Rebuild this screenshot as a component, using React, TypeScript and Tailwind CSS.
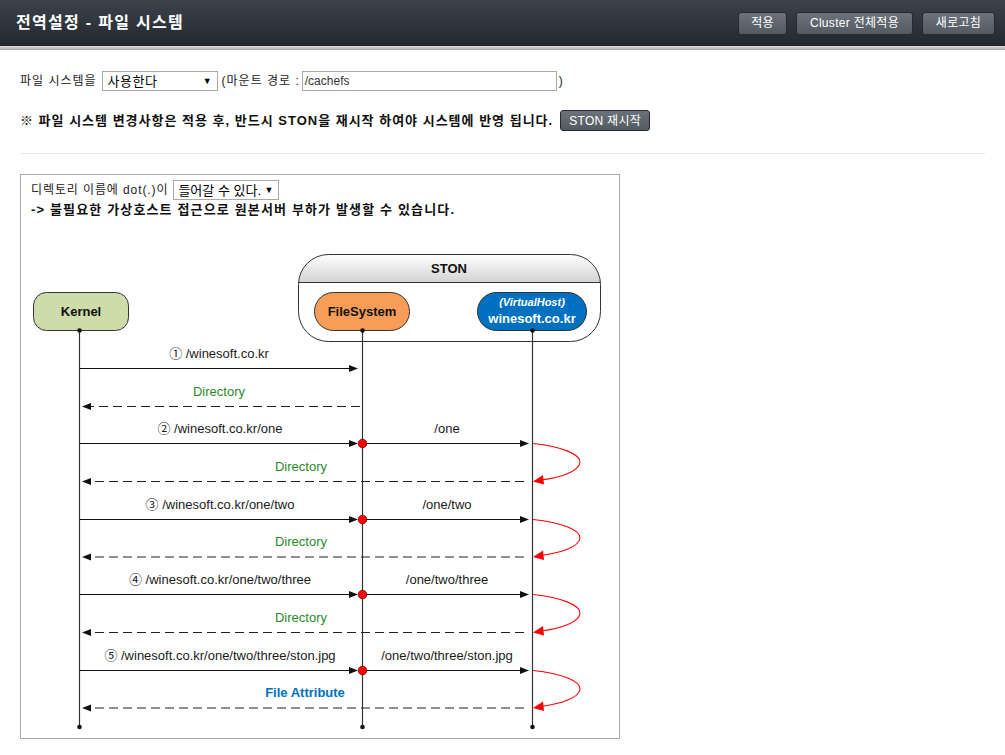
import React from "react";

const FONT = '"Liberation Sans", "Noto Sans CJK KR", sans-serif';

function ArrowR({ x1, x2, y }: { x1: number; x2: number; y: number }) {
  return (
    <g>
      <line x1={x1} y1={y} x2={x2 - 7} y2={y} stroke="#111" strokeWidth={1.1} />
      <polygon points={`${x2},${y} ${x2 - 9},${y - 3.5} ${x2 - 9},${y + 3.5}`} fill="#111" />
    </g>
  );
}

function DashL({ x1, x2, y }: { x1: number; x2: number; y: number }) {
  return (
    <g>
      <line x1={x1} y1={y} x2={x2 + 7} y2={y} stroke="#222" strokeWidth={1.2} strokeDasharray="9 5" />
      <polygon points={`${x2},${y} ${x2 + 9},${y - 3.5} ${x2 + 9},${y + 3.5}`} fill="#111" />
    </g>
  );
}

function Curve({ y1, y2 }: { y1: number; y2: number }) {
  const m = (y1 + y2) / 2;
  return (
    <g>
      <path
        d={`M533,${y1} C562,${y1 + 3} 581,${m - 8} 580,${m} C579,${m + 9} 560,${y2 - 4} 541,${y2 - 1.5}`}
        fill="none"
        stroke="#ff0000"
        strokeWidth={1.1}
      />
      <polygon points={`533,${y2} 543,${y2 - 6.5} 544,${y2 + 3}`} fill="#ff0000" />
    </g>
  );
}

function Label({ x, y, children, fill = "#1a1a1a", bold = false }: { x: number; y: number; children: React.ReactNode; fill?: string; bold?: boolean }) {
  return (
    <text x={x} y={y + 4.5} textAnchor="middle" fontSize={13} fill={fill} fontWeight={bold ? 700 : 400} fontFamily={FONT}>
      {children}
    </text>
  );
}

function Diagram() {
  const rows = [
    { n: "②", path: "/winesoft.co.kr/one", right: "/one", y: 443.5, dy: 481.5, ret: "Directory" },
    { n: "③", path: "/winesoft.co.kr/one/two", right: "/one/two", y: 519.5, dy: 557, ret: "Directory" },
    { n: "④", path: "/winesoft.co.kr/one/two/three", right: "/one/two/three", y: 594.5, dy: 632.5, ret: "Directory" },
    { n: "⑤", path: "/winesoft.co.kr/one/two/three/ston.jpg", right: "/one/two/three/ston.jpg", y: 670.5, dy: 708, ret: "File Attribute" },
  ];
  return (
    <svg width={598} height={519} viewBox="21 219 598 519" className="block">
      <defs>
        <linearGradient id="hdr" x1="0" y1="0" x2="0" y2="1">
          <stop offset="0" stopColor="#ffffff" />
          <stop offset="1" stopColor="#d4d4d4" />
        </linearGradient>
        <clipPath id="stonclip">
          <rect x={298.5} y={254.5} width={302} height={87} rx={30} />
        </clipPath>
      </defs>
      <rect x={298.5} y={254.5} width={302} height={87} rx={30} fill="#fff" />
      <rect x={298} y={254} width={303} height={28} fill="url(#hdr)" clipPath="url(#stonclip)" />
      <line x1={298.5} y1={282.5} x2={600.5} y2={282.5} stroke="#333" strokeWidth={1} />
      <rect x={298.5} y={254.5} width={302} height={87} rx={30} fill="none" stroke="#333" strokeWidth={1} />
      <text x={449} y={272.5} textAnchor="middle" fontSize={13} fontWeight={700} fill="#111" fontFamily={FONT}>STON</text>

      <rect x={33.5} y={292.5} width={95} height={38} rx={13} fill="#cddcaa" stroke="#333" />
      <text x={81} y={316} textAnchor="middle" fontSize={13} fontWeight={700} fill="#111" fontFamily={FONT}>Kernel</text>
      <rect x={314.5} y={292.5} width={95} height={38} rx={19} fill="#f79d57" stroke="#333" />
      <text x={362} y={316} textAnchor="middle" fontSize={13} fontWeight={700} fill="#111" fontFamily={FONT}>FileSystem</text>
      <rect x={477.5} y={292.5} width={109} height={38} rx={19} fill="#0070c0" stroke="#333" />
      <text x={532} y={306} textAnchor="middle" fontSize={11} fontStyle="italic" fontWeight={700} fill="#fff" fontFamily={FONT}>(VirtualHost)</text>
      <text x={532} y={322.5} textAnchor="middle" fontSize={13} fontWeight={700} fill="#fff" fontFamily={FONT}>winesoft.co.kr</text>

      {[79.5, 362.5, 532.5].map((x) => (
        <g key={x}>
          <line x1={x} y1={330} x2={x} y2={727} stroke="#333" strokeWidth={1.2} />
          <circle cx={x} cy={330.5} r={2.3} fill="#111" />
          <circle cx={x} cy={727} r={2.3} fill="#111" />
        </g>
      ))}

      <Label x={219} y={353}>① /winesoft.co.kr</Label>
      <ArrowR x1={80} x2={358} y={368.5} />
      <Label x={219} y={391} fill="#2a8a2a">Directory</Label>
      <DashL x1={360} x2={82} y={406.5} />

      {rows.map((r) => (
        <g key={r.n}>
          <Label x={220} y={r.y - 15.5}>{r.n + " " + r.path}</Label>
          <Label x={447} y={r.y - 15.5}>{r.right}</Label>
          <ArrowR x1={80} x2={358} y={r.y} />
          <ArrowR x1={363} x2={529} y={r.y} />
          <circle cx={362.5} cy={r.y} r={4.3} fill="#ff0000" stroke="#7a0000" strokeWidth={0.8} />
          <Curve y1={r.y} y2={r.dy} />
          {r.ret === "Directory" ? (
            <Label x={301} y={r.dy - 15.5} fill="#2a8a2a">Directory</Label>
          ) : (
            <Label x={305} y={r.dy - 15.5} fill="#0070c0" bold>File Attribute</Label>
          )}
          <DashL x1={524} x2={82} y={r.dy} />
        </g>
      ))}
    </svg>
  );
}

function FakeSelect({ text, w, track }: { text: string; w: string; track: string }) {
  return (
    <div className={`flex h-[20px] ${w} shrink-0 items-center justify-between whitespace-nowrap border border-[#a9a9a9] bg-white pl-[4px] pr-[5px] text-[13px] leading-none text-black`}>
      <span className={track}>{text}</span>
      <span className="text-[9px]">▼</span>
    </div>
  );
}

export default function App() {
  return (
    <div className="min-h-[755px] w-[1005px] bg-white text-[#222]" style={{ fontFamily: FONT }}>
      <div className="flex h-[46px] items-center justify-between bg-gradient-to-b from-[#3c434d] to-[#23282e] pl-[16px] pr-[10px]">
        <div className="text-[16px] font-bold tracking-[1.3px] text-white">전역설정 - 파일 시스템</div>
        <div className="flex gap-[9px]">
          {[
            ["적용", "w-[49px]"],
            ["Cluster 전체적용", "w-[117px]"],
            ["새로고침", "w-[73px]"],
          ].map(([t, w]) => (
            <div
              key={t}
              className={`flex h-[23px] ${w} items-center justify-center rounded-[3px] border border-[#262a2f] bg-gradient-to-b from-[#6c727b] to-[#545a62] text-[12px] leading-none tracking-[0.3px] text-white`}
            >
              {t}
            </div>
          ))}
        </div>
      </div>
      <div className="h-[4px] bg-gradient-to-b from-[#d9d9d9] to-[#a9a9a9]" />

      <div className="px-[20px]">
        <div className="mt-[21px] flex h-[20px] items-center whitespace-nowrap text-[12px] leading-none">
          <span className="mr-[5px] tracking-[1px]">파일 시스템을</span>
          <FakeSelect text="사용한다" w="w-[116px]" track="tracking-[0.5px] pl-[1px]" />
          <span className="ml-[4px] mr-[2px] tracking-[1px]">(마운트 경로 :</span>
          <div className="flex h-[20px] w-[255px] items-center border border-[#a9a9a9] pl-[2px] text-[12px] text-[#333]">/cachefs</div>
          <span className="ml-[2px]">)</span>
        </div>

        <div className="mt-[19px] flex h-[21px] items-center whitespace-nowrap">
          <span className="text-[13px] font-bold leading-none tracking-[1px] text-[#111]">
            ※ 파일 시스템 변경사항은 적용 후, 반드시 STON을 재시작 하여야 시스템에 반영 됩니다.
          </span>
          <div className="ml-[7px] flex h-[21px] w-[90px] items-center justify-center rounded-[3px] border border-[#262a2f] bg-gradient-to-b from-[#6c727b] to-[#545a62] text-[12px] leading-none tracking-[0.3px] text-white">
            STON 재시작
          </div>
        </div>

        <div className="mt-[22px] h-px w-[965px] bg-[#e6e6e6]" />

        <div className="mt-[20px] w-[600px] border border-[#a9a9a9]">
          <div className="pl-[10px] pt-[5px]">
            <div className="flex h-[20px] items-center whitespace-nowrap text-[12px] leading-none">
              <span className="mr-[5px] tracking-[0.9px]">디렉토리 이름에 dot(.)이</span>
              <FakeSelect text="들어갈 수 있다." w="w-[106px]" track="tracking-[0px]" />
            </div>
            <div className="flex h-[19px] items-center whitespace-nowrap text-[13px] font-bold leading-none tracking-[1.15px] text-[#111]">
              -&gt; 불필요한 가상호스트 접근으로 원본서버 부하가 발생할 수 있습니다.
            </div>
          </div>
          <Diagram />
        </div>
      </div>
    </div>
  );
}
